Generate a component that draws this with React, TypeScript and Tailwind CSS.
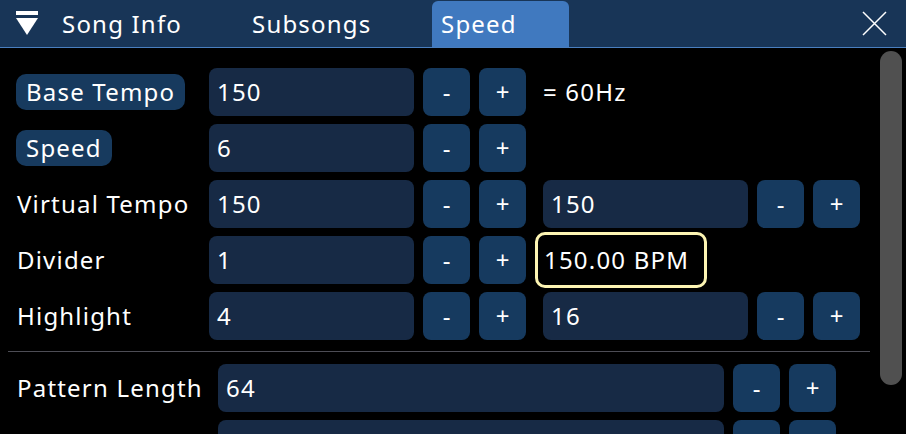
import React from "react";

const inputCls =
  "flex h-12 items-center rounded-lg bg-[#172a45] px-2 text-white";
const btnCls =
  "flex h-12 w-[47px] items-center justify-center rounded-lg bg-[#163a5f] text-white";

function Field({ value, width = "w-[205px]" }: { value: string; width?: string }) {
  return <div className={`${inputCls} ${width}`}>{value}</div>;
}

function Stepper() {
  return (
    <div className="flex gap-[9px] tracking-normal">
      <div className={btnCls}>-</div>
      <div className={btnCls}>+</div>
    </div>
  );
}

function Label({ text, pill }: { text: string; pill?: boolean }) {
  return (
    <div className="flex w-[193px] shrink-0 items-center">
      {pill ? (
        <span className="rounded-[10px] bg-[#173a5e] px-[10px] leading-9">{text}</span>
      ) : (
        <span className="pl-px">{text}</span>
      )}
    </div>
  );
}

export default function App() {
  return (
    <div
      className="h-[434px] w-[906px] overflow-hidden bg-black text-[24px] tracking-[0.05em] text-white"
      style={{ fontFamily: '"Noto Sans", "Open Sans", sans-serif' }}
    >
      {/* tab bar */}
      <div className="flex h-12 items-end border-b border-[#4a7fbf] bg-[#183557]">
        <div className="flex h-full w-[62px] items-center justify-center pr-2">
          <svg width="22" height="25" viewBox="0 0 22 25">
            <rect x="0" y="0" width="22" height="4" fill="white" />
            <polygon points="0,7 22,7 11,24" fill="white" />
          </svg>
        </div>
        <div className="flex h-[46px] w-[190px] items-center">Song Info</div>
        <div className="flex h-[46px] w-[180px] items-center">Subsongs</div>
        <div className="flex h-[46px] w-[137px] items-center rounded-t-md bg-[#4079bf] pl-[9px]">
          Speed
        </div>
        <div className="flex-1" />
        <div className="flex h-full w-[50px] items-center justify-center pr-[14px]">
          <svg width="25" height="25" viewBox="0 0 25 25">
            <path d="M1 1 L24 24 M24 1 L1 24" stroke="white" strokeWidth="1.5" />
          </svg>
        </div>
      </div>

      <div className="flex">
        <div className="w-[872px] pl-4 pr-[2px] pt-5">
          <div className="flex flex-col gap-2">
            <div className="flex items-center">
              <Label text="Base Tempo" pill />
              <div className="flex gap-[9px]">
                <Field value="150" />
                <Stepper />
              </div>
              <span className="ml-[17px]">= 60Hz</span>
            </div>
            <div className="flex items-center">
              <Label text="Speed" pill />
              <div className="flex gap-[9px]">
                <Field value="6" />
                <Stepper />
              </div>
            </div>
            <div className="flex items-center">
              <Label text="Virtual Tempo" />
              <div className="flex gap-[9px]">
                <Field value="150" />
                <Stepper />
                <div className="ml-2 flex gap-[9px]">
                  <Field value="150" />
                  <Stepper />
                </div>
              </div>
            </div>
            <div className="flex h-12 items-center">
              <Label text="Divider" />
              <div className="flex items-center gap-[9px]">
                <Field value="1" />
                <Stepper />
                <div className="-my-1 flex h-14 w-[172px] items-center rounded-[10px] border-[3px] border-[#fdf5b3] pl-[6px]">
                  150.00 BPM
                </div>
              </div>
            </div>
            <div className="flex items-center">
              <Label text="Highlight" />
              <div className="flex gap-[9px]">
                <Field value="4" />
                <Stepper />
                <div className="ml-2 flex gap-[9px]">
                  <Field value="16" />
                  <Stepper />
                </div>
              </div>
            </div>
          </div>

          <div className="-ml-2 mb-3 mt-[11px] h-px bg-[#4d4d55]" />

          <div className="flex flex-col gap-2">
            <div className="flex items-center">
              <div className="w-[202px] shrink-0 pl-px">Pattern Length</div>
              <div className="flex gap-[9px]">
                <Field value="64" width="w-[506px]" />
                <Stepper />
              </div>
            </div>
            <div className="flex items-center">
              <div className="w-[202px] shrink-0" />
              <div className="flex gap-[9px]">
                <Field value="" width="w-[506px]" />
                <Stepper />
              </div>
            </div>
          </div>
        </div>
        <div className="pl-2 pt-[3px]">
          <div className="h-[334px] w-[22px] rounded-full bg-[#505050]" />
        </div>
      </div>
    </div>
  );
}
